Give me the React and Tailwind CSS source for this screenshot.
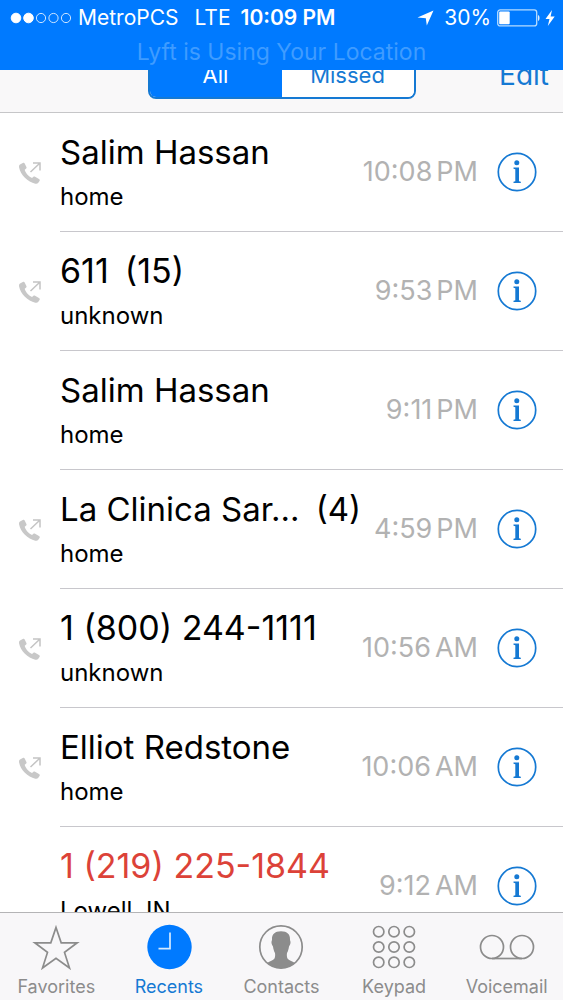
const calls = [
    { name: "Salim Hassan", label: "home", time: "10:08", period: "PM", outgoing: true },
    { name: "611", count: 15, label: "unknown", time: "9:53", period: "PM", outgoing: true },
    { name: "Salim Hassan", label: "home", time: "9:11", period: "PM" },
    { name: "La Clinica Sar...", count: 4, label: "home", time: "4:59", period: "PM", outgoing: true },
    { name: "1 (800) 244-1111", label: "unknown", time: "10:56", period: "AM", outgoing: true },
    { name: "Elliot Redstone", label: "home", time: "10:06", period: "AM", outgoing: true },
    { name: "1 (219) 225-1844", label: "Lowell, IN", time: "9:12", period: "AM", missed: true },
];

/* ICONS */
function OutgoingIcon() {
    return (
        <svg width="22" height="22" viewBox="0 0 22 22" fill="none" aria-label="Outgoing call">
            <path
                d="M1 2.600 3.800.9C4.600.4 5.300.6 5.700 1.400l1.700 3.500c.4.8.2 1.400-.5 1.900l-1.200.9c.7 3 3.800 6.600 7.300 8.300l1.200-1c.6-.5 1.200-.6 1.900-.2l3.900 2.200c.8.5 1 1.200.5 2l-1.200 1.800c-.7 1-1.700 1.200-3 .9C8.800 19.800 1.500 12.800.1 5.400-.1 4.100.1 3.200 1 2.600Z"
                fill="#c8c8c8"
            />
            <path d="M11.500 10 20.500 1.500M14 1h7v7.500" stroke="#c4c4c4" strokeWidth="1.500" />
        </svg>
    );
}

function InfoIcon() {
    return (
        <svg width="40" height="40" viewBox="0 0 40 40" fill="none" aria-hidden="true">
            <circle cx="20" cy="20" r="18.700" stroke="#1579d3" strokeWidth="1.700" />
            <circle cx="19.800" cy="10.800" r="2.500" fill="#1579d3" />
            <path d="M16.500 15.500h5.500v13.800l1.800.4v1.200h-7.300v-1.200l1.800-.4V17.200l-1.800-.4Z" fill="#1579d3" />
        </svg>
    );
}

function StarIcon() {
    return (
        <svg width="48" height="48" viewBox="0 0 48 48" fill="none">
            <path
                d="M24 4.500l5.200 15.300h16L32.500 29.400l5 15.600L24 35.400 10.500 45l5-15.600L2.800 19.800h16Z"
                stroke="#8c8c8c"
                strokeWidth="1.700"
            />
        </svg>
    );
}

function ClockIcon() {
    return (
        <svg width="48" height="48" viewBox="0 0 48 48" fill="none">
            <circle cx="24.500" cy="24" r="22.200" fill="#007aff" />
            <path d="M25 9.500v16.200H13.500" stroke="#d5eaff" strokeWidth="1.700" />
        </svg>
    );
}

function PersonIcon() {
    return (
        <svg width="48" height="48" viewBox="0 0 48 48" fill="none">
            <circle cx="24" cy="24" r="21.200" stroke="#8c8c8c" strokeWidth="1.700" />
            <path
                d="M24 8.300c6.200 0 9.200 3 9 8.200-.1 1.200.7 1.800.5 3.400-.2 1.700-1 2.300-1.500 3.500-.4 2.600-1 4.800-2 6.600-.3 2.200-.2 4 .5 5.600 1.300 2 4.500 2.600 7.500 4.400A21.200 21.200 0 0 1 24 45.200a21.200 21.200 0 0 1-14-5.200c3-1.800 6.200-2.400 7.500-4.400.7-1.600.8-3.400.5-5.600-1-1.800-1.600-4-2-6.600-.5-1.200-1.300-1.800-1.500-3.500-.2-1.600.6-2.200.5-3.400-.2-5.200 2.800-8.200 9-8.200Z"
                fill="#8c8c8c"
            />
        </svg>
    );
}

function KeypadIcon() {
    const spots = [8.700, 24, 39.300];
    return (
        <svg width="48" height="48" viewBox="0 0 48 48" fill="none">
            {spots.map((cy) =>
                spots.map((cx) => (
                    <circle key={`${cx}-${cy}`} cx={cx} cy={cy} r="5.200" stroke="#8c8c8c" strokeWidth="1.700" />
                ))
            )}
        </svg>
    );
}

function VoicemailIcon() {
    return (
        <svg width="56" height="48" viewBox="0 0 56 48" fill="none" stroke="#8c8c8c" strokeWidth="1.700">
            <circle cx="13" cy="24" r="11.500" />
            <circle cx="43" cy="24" r="11.500" />
            <path d="M13 35.500h30" />
        </svg>
    );
}

const tabs = [
    { name: "Favorites", icon: StarIcon },
    { name: "Recents", icon: ClockIcon, active: true },
    { name: "Contacts", icon: PersonIcon },
    { name: "Keypad", icon: KeypadIcon },
    { name: "Voicemail", icon: VoicemailIcon },
];

function StatusBar() {
    return (
        <div className="shrink-0 bg-[#007aff] text-white">
            <div className="flex items-center h-9 pl-2.5 pr-2 text-[21px]">
                <svg width="62" height="12" viewBox="0 0 62 12" fill="none" stroke="white" aria-label="Signal">
                    <circle cx="6" cy="6" r="4.800" fill="white" />
                    <circle cx="18.500" cy="6" r="4.800" fill="white" />
                    <circle cx="31" cy="6" r="4.600" strokeWidth=".8" />
                    <circle cx="43.500" cy="6" r="4.600" strokeWidth=".8" />
                    <circle cx="56" cy="6" r="4.600" strokeWidth=".8" />
                </svg>
                <span className="ml-1.5">MetroPCS</span>
                <span className="ml-4">LTE</span>
                <span className="ml-2.5 font-semibold">10:09 PM</span>
                <div className="ml-auto flex items-center">
                    <svg width="17" height="16" viewBox="0 0 17 16" fill="white" aria-label="Location in use">
                        <path d="M16.500.5 9.800 15.500 8.800 8.300.5 7.500Z" />
                    </svg>
                    <span className="ml-2.5">30%</span>
                    <svg className="ml-1.5" width="44" height="18" viewBox="0 0 44 18" fill="none" aria-label="Battery charging">
                        <rect x=".7" y=".9" width="39" height="16" rx="2.500" stroke="#b5dcff" strokeWidth="1.300" />
                        <rect x="2.200" y="2.500" width="10.500" height="12.800" rx="1" fill="white" />
                        <path d="M41 6c2 .5 2 5.500 0 6Z" fill="#d9ecff" />
                    </svg>
                    <svg className="ml-1" width="10" height="16" viewBox="0 0 10 16" fill="white">
                        <path d="M7 0 .5 9h4L2.800 16 9.700 6.500H5.600Z" />
                    </svg>
                </div>
            </div>
            <p className="h-[34px] leading-8 text-center text-[23px] text-[#3f9cff]">
                Lyft is Using Your Location
            </p>
        </div>
    );
}

function CallRow({ call }) {
    // numbers are set a little larger than contact names
    const isNumber = /^\d/.test(call.name);

    return (
        <li className="flex">
            <div className="w-15 shrink-0 flex items-center pl-[19px]">
                {call.outgoing && <OutgoingIcon />}
            </div>
            <div className="flex-1 min-w-0 flex items-center border-b border-[#c8c7cc] py-[18px] pr-[26px]">
                <div className="flex-1 min-w-0 flex flex-col gap-2 whitespace-nowrap">
                    <p
                        className={`flex gap-4 leading-[42px] ${isNumber ? "text-[34px]" : "text-[33px]"} ${
                            call.missed ? "text-[#dc4238]" : "text-black"
                        }`}
                    >
                        <span>{call.name}</span>
                        {call.count && <span>({call.count})</span>}
                    </p>
                    <p className="text-[24px] leading-8 text-black">{call.label}</p>
                </div>
                <time className="flex gap-1 text-[27px] leading-8 whitespace-nowrap text-[#b2b2b2]">
                    <span>{call.time}</span>
                    <span>{call.period}</span>
                </time>
                <button type="button" className="ml-[19px] shrink-0" aria-label={`Details for ${call.name}`}>
                    <InfoIcon />
                </button>
            </div>
        </li>
    );
}

function App() {
    return (
        <div className="h-screen flex flex-col overflow-hidden bg-white font-['Inter',sans-serif]">
            <StatusBar />

            {/* FILTER BAR, its top tucked under the status bar */}
            <header className="shrink-0 h-[43px] overflow-hidden grid grid-cols-[1fr_268px_1fr] content-end pb-[13px] bg-[#f9f8f9] border-b border-[#c6c6c8]">
                <div className="col-start-2 flex h-12 rounded-lg border-2 border-[#1579d3] overflow-hidden text-[22px]">
                    <button type="button" aria-pressed="true" className="flex-1 bg-[#007aff] text-white">
                        All
                    </button>
                    <button type="button" aria-pressed="false" className="flex-1 bg-white text-[#1579d3]">
                        Missed
                    </button>
                </div>
                <button type="button" className="h-12 justify-self-end pr-3.5 text-[28px] text-[#1579d3]">
                    Edit
                </button>
            </header>

            {/* CALL LIST */}
            <main className="flex-1 min-h-0 overflow-hidden">
                <ul>
                    {calls.map((call, i) => (
                        <CallRow key={i} call={call} />
                    ))}
                </ul>
            </main>

            {/* TAB BAR */}
            <nav className="shrink-0 grid grid-cols-5 border-t border-[#b4b4b6] bg-[#f8f7f9] pt-2.5 pb-px">
                {tabs.map(({ name, icon: Icon, active }) => (
                    <a
                        key={name}
                        href="#"
                        className={`flex flex-col items-center gap-1 text-[18px] leading-6 ${active ? "text-[#1579d3]" : "text-[#8c8c8c]"}`}
                    >
                        <Icon />
                        {name}
                    </a>
                ))}
            </nav>
        </div>
    );
}

export default App;
